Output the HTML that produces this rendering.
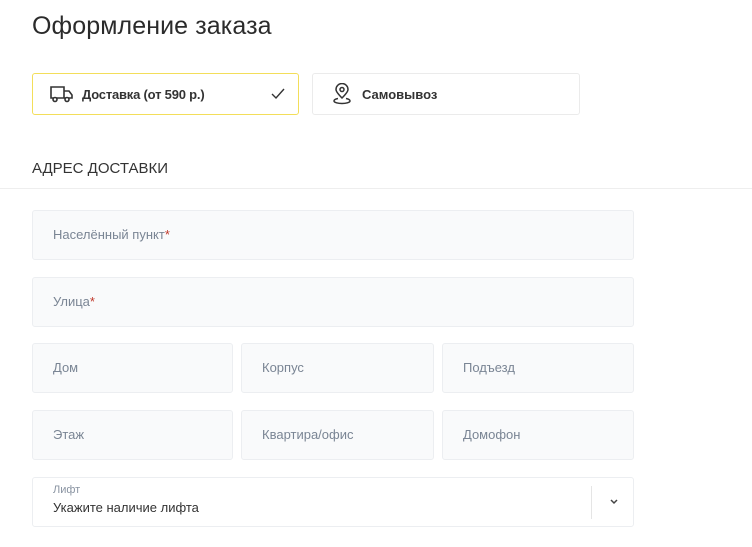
<!DOCTYPE html>
<html><head><meta charset="utf-8"><style>
*{box-sizing:border-box;margin:0;padding:0}
body{width:752px;height:547px;overflow:hidden;background:#fff;font-family:"Liberation Sans","DejaVu Sans",sans-serif;color:#333;position:relative}
.a{position:absolute}
h1{position:absolute;left:32px;top:12px;font-size:25px;font-weight:400;color:#2b2b2b;letter-spacing:0.1px}
.btn{position:absolute;top:73px;height:42px;border:1px solid #ebebeb;border-radius:3px;background:#fff;font-size:13px;font-weight:700;color:#333}
.btn.sel{border-color:#f3de5a}
.sec{left:32px;top:160px;font-size:15px;color:#333}
.line{left:0;top:188px;width:752px;height:1px;background:#eee}
.in{position:absolute;height:50px;background:#f9fafb;border:1px solid #eceef1;border-radius:3px;font-size:13px;color:#7a8594;padding-left:20px;line-height:48px}
.in i{font-style:normal;color:#c0392b}
</style></head><body>
<h1>Оформление заказа</h1>
<div class="btn sel" style="left:32px;width:267px">
<svg class="a" style="left:17px;top:10px" width="24" height="20" viewBox="0 0 24 20" fill="none" stroke="#333" stroke-width="1.6"><path d="M1 3h13v11H1z"/><path d="M14 7h5l3 4v3h-8"/><circle cx="5" cy="15.5" r="2" fill="#fff"/><circle cx="17" cy="15.5" r="2" fill="#fff"/></svg>
<span class="a" style="left:49px;top:13px;letter-spacing:-0.2px">Доставка (от 590 р.)</span>
<svg class="a" style="left:238px;top:14px" width="14" height="12" viewBox="0 0 14 12" fill="none" stroke="#333" stroke-width="1.4"><path d="M1 6l4 4 8-9"/></svg>
</div>
<div class="btn" style="left:312px;width:268px">
<svg class="a" style="left:20px;top:9px" width="18" height="22" viewBox="0 0 18 22" fill="none" stroke="#333" stroke-width="1.5"><path d="M9 15C5 11 3 8.5 3 6.5a6 6 0 0112 0C15 8.5 13 11 9 15z"/><circle cx="9" cy="6.5" r="2"/><path d="M5 15.5C2 16 1 17 1 18c0 1.5 4 2.5 8 2.5s8-1 8-2.5c0-1-1-2-4-2.5"/></svg>
<span class="a" style="left:49px;top:13px">Самовывоз</span>
</div>
<div class="a sec">АДРЕС ДОСТАВКИ</div>
<div class="a line"></div>
<div class="in" style="left:32px;top:210px;width:602px">Населённый пункт<i>*</i></div>
<div class="in" style="left:32px;top:277px;width:602px">Улица<i>*</i></div>
<div class="in" style="left:32px;top:343px;width:201px">Дом</div>
<div class="in" style="left:241px;top:343px;width:193px">Корпус</div>
<div class="in" style="left:442px;top:343px;width:192px">Подъезд</div>
<div class="in" style="left:32px;top:410px;width:201px">Этаж</div>
<div class="in" style="left:241px;top:410px;width:193px">Квартира/офис</div>
<div class="in" style="left:442px;top:410px;width:192px">Домофон</div>
<div class="a" style="left:32px;top:477px;width:602px;height:50px;border:1px solid #eceef1;border-radius:3px;background:#fff">
<span class="a" style="left:20px;top:6px;font-size:11px;color:#8a94a2">Лифт</span>
<span class="a" style="left:20px;top:22px;font-size:13px;color:#333">Укажите наличие лифта</span>
<div class="a" style="left:558px;top:8px;width:1px;height:33px;background:#e5e5e5"></div>
<svg class="a" style="left:576px;top:20px" width="10" height="7" viewBox="0 0 10 7" fill="none" stroke="#444" stroke-width="1.5"><path d="M2 2l3 3 3-3"/></svg>
</div>
</body></html>
